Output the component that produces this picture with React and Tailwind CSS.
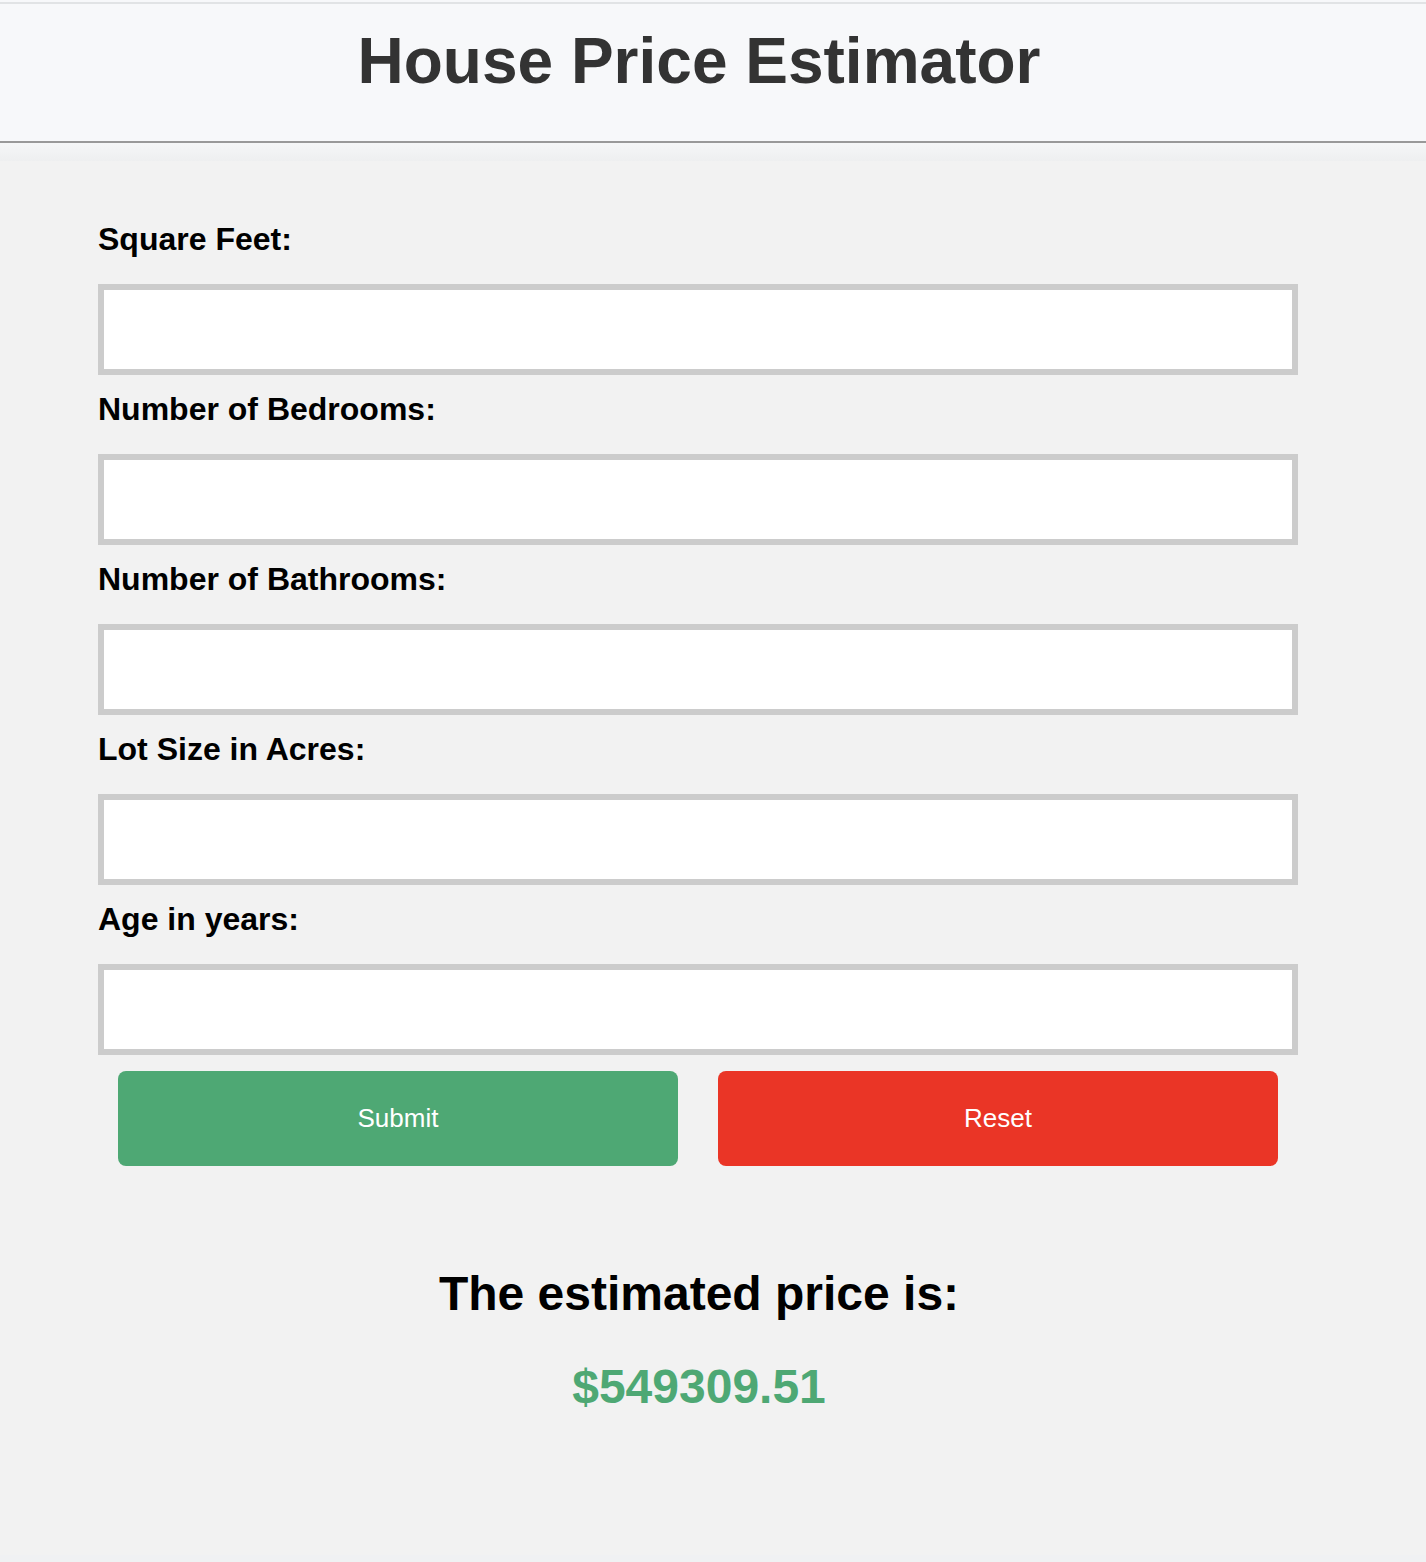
import { useState } from "react";

const fields = [
  { name: "sqft", label: "Square Feet:" },
  { name: "bedrooms", label: "Number of Bedrooms:" },
  { name: "bathrooms", label: "Number of Bathrooms:" },
  { name: "lot", label: "Lot Size in Acres:" },
  { name: "age", label: "Age in years:" },
];

export default function App() {
  const [form, setForm] = useState({ sqft: "", bedrooms: "", bathrooms: "", lot: "", age: "" });
  const [price] = useState("$549309.51");

  const handleChange = (e) => {
    setForm({ ...form, [e.target.name]: e.target.value });
  };

  const handleReset = () => {
    setForm({ sqft: "", bedrooms: "", bathrooms: "", lot: "", age: "" });
  };

  return (
    <div className="min-h-screen bg-[#f0f1f3] font-['Liberation_Sans',Arial,sans-serif]">
      {/* header */}
      <div className="bg-[#f7f8fa] pt-[2px]">
        <header className="h-[141px] border-t-2 border-b-2 border-t-[#e1e3e5] border-b-[#999999] pt-[21px]">
          <h1 className="w-[1398px] text-center text-[64px] leading-[72px] font-bold text-[#333333]">
            House Price Estimator
          </h1>
        </header>
      </div>

      {/* main */}
      <main className="bg-[#f2f2f2] pb-[141px]">
        <div className="h-[18px] bg-gradient-to-b from-[#f5f6f7] to-[#eeeff0]" />

        <form className="pl-[98px] pt-[60px]" onSubmit={(e) => e.preventDefault()}>
          {fields.map((f, i) => (
            <div key={f.name} className={i > 0 ? "mt-[16px]" : ""}>
              <label className="block text-[32px] leading-[37px] font-bold text-black">{f.label}</label>
              <input
                name={f.name}
                value={form[f.name]}
                onChange={handleChange}
                className="mt-[26px] box-border block h-[91px] w-[1200px] border-[6px] border-[#cccccc] bg-white px-3 text-[26px] outline-none"
              />
            </div>
          ))}

          <div className="mt-[16px] flex w-[1200px] justify-center gap-[40px]">
            <button className="flex h-[95px] w-[560px] items-center justify-center rounded-[8px] bg-[#4ea874] text-[26px] text-white">
              Submit
            </button>
            <button
              type="button"
              onClick={handleReset}
              className="flex h-[95px] w-[560px] items-center justify-center rounded-[8px] bg-[#ea3526] text-[26px] text-white"
            >
              Reset
            </button>
          </div>
        </form>

        {/* result */}
        <div className="w-[1398px] text-center">
          <h2 className="mt-[100px] text-[48px] leading-[55px] font-bold text-black">The estimated price is:</h2>
          <p className="mt-[38px] text-[48px] leading-[55px] font-bold text-[#4ea874]">{price}</p>
        </div>
      </main>
    </div>
  );
}
